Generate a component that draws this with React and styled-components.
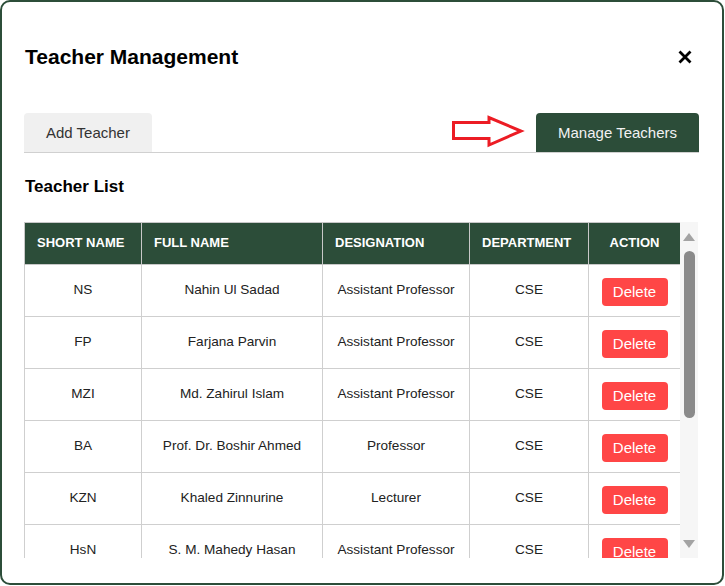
import React from "react"
import styled, { createGlobalStyle } from "styled-components"

const GREEN = "#2c4d39"

const GlobalStyle = createGlobalStyle`
  html, body {
    margin: 0;
    padding: 0;
    background: #fff;
    font-family: "Liberation Sans", Arial, sans-serif;
  }
`

const teachers = [
  { short: "NS", name: "Nahin Ul Sadad", designation: "Assistant Professor" },
  { short: "FP", name: "Farjana Parvin", designation: "Assistant Professor" },
  { short: "MZI", name: "Md. Zahirul Islam", designation: "Assistant Professor" },
  { short: "BA", name: "Prof. Dr. Boshir Ahmed", designation: "Professor" },
  { short: "KZN", name: "Khaled Zinnurine", designation: "Lecturer" },
  { short: "HsN", name: "S. M. Mahedy Hasan", designation: "Assistant Professor" },
]

const columns = [
  { label: "Short Name", width: 117, align: "left" },
  { label: "Full Name", width: 181, align: "left" },
  { label: "Designation", width: 147, align: "left" },
  { label: "Department", width: 119, align: "left" },
  { label: "Action", width: 92, align: "center" },
]

const App = () => {
  return (
    <>
      <GlobalStyle />
      <Modal>
        <Header>
          <Title>Teacher Management</Title>
          <CloseButton aria-label="Close">
            <svg width="14" height="14" viewBox="0 0 14 14">
              <path d="M1.5 1.5 L12.5 12.5 M12.5 1.5 L1.5 12.5" stroke="#000" strokeWidth="2.8" />
            </svg>
          </CloseButton>
        </Header>

        <TabBar>
          <Tab>Add Teacher</Tab>
          <TabRight>
            <svg width="74" height="33" viewBox="0 0 74 33">
              <path
                d="M2.5 7.5 H38 V2.5 L70 16 L38 30 V23.5 H2.5 Z"
                fill="none"
                stroke="#ec1c24"
                strokeWidth="3"
              />
            </svg>
            <Tab $active>Manage Teachers</Tab>
          </TabRight>
        </TabBar>

        <SectionTitle>Teacher List</SectionTitle>

        <TableArea>
          <TableClip>
            <Table>
              <colgroup>
                {columns.map((c) => (
                  <col key={c.label} style={{ width: c.width }} />
                ))}
              </colgroup>
              <thead>
                <tr>
                  {columns.map((c) => (
                    <Th key={c.label} $align={c.align}>
                      {c.label}
                    </Th>
                  ))}
                </tr>
              </thead>
              <tbody>
                {teachers.map((t) => (
                  <Row key={t.short}>
                    <Td>{t.short}</Td>
                    <Td>{t.name}</Td>
                    <Td>{t.designation}</Td>
                    <Td>CSE</Td>
                    <Td $action>
                      <DeleteButton>Delete</DeleteButton>
                    </Td>
                  </Row>
                ))}
              </tbody>
            </Table>
          </TableClip>
          <Scrollbar>
            <Arrow $dir="up" />
            <Thumb />
            <Arrow $dir="down" />
          </Scrollbar>
        </TableArea>
      </Modal>
    </>
  )
}

const Modal = styled.div`
  box-sizing: border-box;
  width: 724px;
  height: 585px;
  border: 2px solid ${GREEN};
  border-radius: 10px;
  background: #fff;
  padding: 0 23px 0 22px;
  display: flex;
  flex-direction: column;
  overflow: hidden;
`

const Header = styled.div`
  display: flex;
  justify-content: space-between;
  align-items: center;
  margin-top: 43px;
  height: 24px;
`

const Title = styled.h2`
  margin: 0 0 0 1px;
  font-size: 21px;
  line-height: 24px;
  font-weight: 700;
  color: #000;
`

const CloseButton = styled.button`
  border: none;
  background: none;
  padding: 0 7px 0 6px;
  display: flex;
  align-items: center;
  cursor: pointer;
`

const TabBar = styled.div`
  display: flex;
  justify-content: space-between;
  align-items: flex-end;
  margin-top: 44px;
  border-bottom: 1px solid #d0d0d0;
`

const TabRight = styled.div`
  display: flex;
  align-items: center;
  gap: 11px;

  svg {
    margin-bottom: 2px;
  }
`

const Tab = styled.button`
  border: none;
  border-radius: 4px 4px 0 0;
  padding: 10px 22px;
  font-family: inherit;
  font-size: 15px;
  line-height: 19px;
  background: ${(p) => (p.$active ? GREEN : "#f0f0f0")};
  color: ${(p) => (p.$active ? "#f2f2f2" : "#333")};
  cursor: pointer;
`

const SectionTitle = styled.h3`
  margin: 24px 0 0 1px;
  font-size: 17px;
  line-height: 20px;
  font-weight: 700;
  color: #000;
`

const TableArea = styled.div`
  display: flex;
  margin-top: 25px;
  height: 336px;
  width: 674px;
`

const TableClip = styled.div`
  width: 656px;
  height: 336px;
  overflow: hidden;
`

const Table = styled.table`
  width: 656px;
  border-collapse: collapse;
  table-layout: fixed;
`

const Th = styled.th`
  background: ${GREEN};
  color: #fff;
  font-size: 13px;
  font-weight: 700;
  text-transform: uppercase;
  text-align: ${(p) => p.$align};
  padding: 0 12px 2px;
  height: 39px;
  border: 1px solid #c8c8c8;
  white-space: nowrap;
`

const Row = styled.tr`
  height: 52px;
`

const Td = styled.td`
  border: 1px solid #cfcfcf;
  text-align: center;
  font-size: 13.6px;
  color: #222;
  padding: ${(p) => (p.$action ? "3px 8px 0" : "0 8px 3px")};
  white-space: nowrap;
`

const DeleteButton = styled.button`
  border: none;
  border-radius: 4px;
  background: #ff4646;
  color: #fff;
  font-family: inherit;
  font-size: 15px;
  line-height: 20px;
  padding: 4px 11px;
  width: 66px;
  cursor: pointer;
`

const Scrollbar = styled.div`
  width: 18px;
  background: #f6f6f6;
  display: flex;
  flex-direction: column;
  align-items: center;
  padding: 11px 0 10px;
  box-sizing: border-box;
`

const Arrow = styled.div`
  width: 0;
  height: 0;
  border-left: 6px solid transparent;
  border-right: 6px solid transparent;
  ${(p) =>
    p.$dir === "up"
      ? `border-bottom: 8px solid #a3a3a3;`
      : `border-top: 8px solid #a3a3a3; margin-top: auto;`}
`

const Thumb = styled.div`
  width: 11px;
  height: 167px;
  margin-top: 10px;
  border-radius: 6px;
  background: #8a8a8a;
`

export default App
